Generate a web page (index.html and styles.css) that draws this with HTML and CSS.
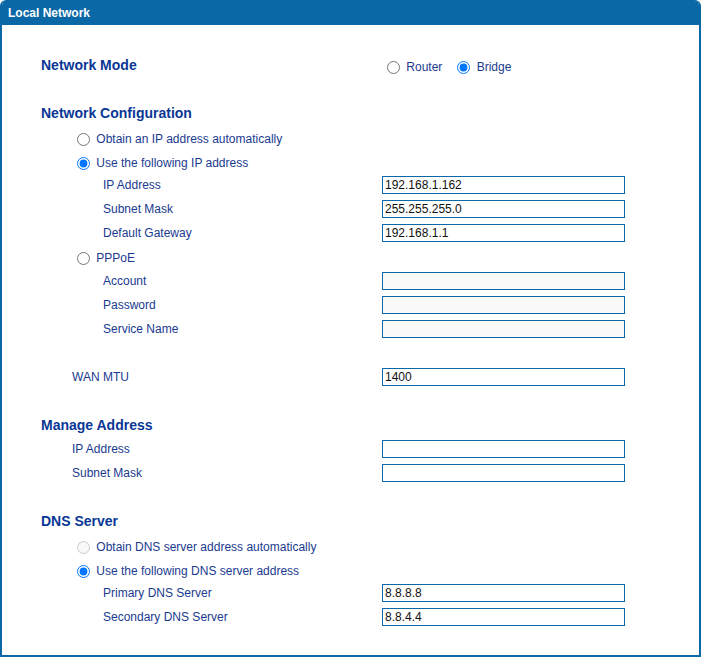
FILE: index.html
```html
<!DOCTYPE html>
<html>
<head>
<meta charset="utf-8">
<link rel="stylesheet" href="styles.css">
</head>
<body>
<div class="panel">
  <div class="panel-head">Local Network</div>
  <div class="panel-body">
    <div class="row heading">
      <span class="lv0">Network Mode</span>
      <div class="mode">
        <label class="opt"><input type="radio" name="mode"> Router</label>
        <label class="opt"><input type="radio" name="mode" checked> Bridge</label>
      </div>
    </div>
    <div class="gap"></div>
    <div class="row heading"><span class="lv0">Network Configuration</span></div>
    <div class="row tall"><label class="lv1 opt"><input type="radio" name="ipmode"> Obtain an IP address automatically</label></div>
    <div class="row short"><label class="lv1 opt"><input type="radio" name="ipmode" checked> Use the following IP address</label></div>
    <div class="row"><span class="lv2">IP Address</span><input class="field" type="text" value="192.168.1.162"></div>
    <div class="row"><span class="lv2">Subnet Mask</span><input class="field" type="text" value="255.255.255.0"></div>
    <div class="row"><span class="lv2">Default Gateway</span><input class="field" type="text" value="192.168.1.1"></div>
    <div class="row"><label class="lv1 opt"><input type="radio" name="ipmode"> PPPoE</label></div>
    <div class="row"><span class="lv2">Account</span><input class="field off" type="text" readonly></div>
    <div class="row"><span class="lv2">Password</span><input class="field off" type="password" readonly></div>
    <div class="row"><span class="lv2">Service Name</span><input class="field off" type="text" readonly></div>
    <div class="gap"></div>
    <div class="row"><span class="lv1">WAN MTU</span><input class="field" type="text" value="1400"></div>
    <div class="gap"></div>
    <div class="row heading"><span class="lv0">Manage Address</span></div>
    <div class="row"><span class="lv1">IP Address</span><input class="field" type="text"></div>
    <div class="row"><span class="lv1">Subnet Mask</span><input class="field" type="text"></div>
    <div class="gap"></div>
    <div class="row heading"><span class="lv0">DNS Server</span></div>
    <div class="row tall"><label class="lv1 opt"><input type="radio" name="dns" disabled> Obtain DNS server address automatically</label></div>
    <div class="row short"><label class="lv1 opt"><input type="radio" name="dns" checked> Use the following DNS server address</label></div>
    <div class="row"><span class="lv2">Primary DNS Server</span><input class="field" type="text" value="8.8.8.8"></div>
    <div class="row"><span class="lv2">Secondary DNS Server</span><input class="field" type="text" value="8.8.4.4"></div>
  </div>
</div>
</body>
</html>
```
FILE: styles.css
```css
html, body {
  margin: 0;
  padding: 0;
  background: #ffffff;
}
body {
  font-family: "Liberation Sans", Arial, sans-serif;
  font-size: 12px;
  color: #1a3a8f;
}
.panel {
  width: 701px;
  height: 657px;
  box-sizing: border-box;
  border: 2px solid #0a68a6;
  border-top: 0;
  border-radius: 6px 6px 0 0;
  overflow: hidden;
}
.panel-head {
  height: 25px;
  line-height: 26px;
  background: #0a68a6;
  color: #ffffff;
  font-weight: bold;
  font-size: 12px;
  padding-left: 6px;
}
.panel-body {
  padding-top: 28px;
}
.row {
  display: grid;
  grid-template-columns: 380px 243px;
  align-items: center;
  height: 24px;
}
.row.tall { height: 26px; }
.row.short { height: 22px; }
.gap { height: 24px; }
.heading .lv0 {
  font-size: 14px;
  font-weight: bold;
  color: #0a3796;
}
.lv0 { padding-left: 39px; }
.lv1 { padding-left: 70px; }
.lv2 { padding-left: 101px; }
.opt {
  display: flex;
  align-items: center;
  white-space: pre;
  padding-top: 2px;
}
.opt input {
  margin: 0 3px 0 5px;
  width: 13px;
  height: 13px;
}
.mode {
  display: flex;
  align-items: center;
  gap: 10px;
  padding-top: 2px;
}
.field {
  box-sizing: border-box;
  width: 243px;
  height: 18px;
  margin: 0;
  padding: 0 2px;
  border: 1px solid #0a68a6;
  border-radius: 0;
  background: #ffffff;
  font-family: "Liberation Sans", Arial, sans-serif;
  font-size: 12px;
  color: #111111;
  outline: none;
}
.field.off {
  background: #f9f9f9;
}
```
